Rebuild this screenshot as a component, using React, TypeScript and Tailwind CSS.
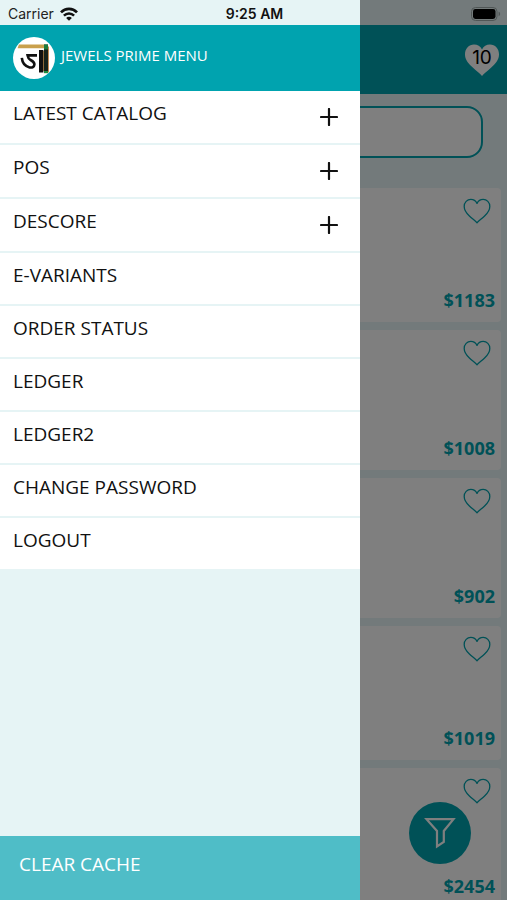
import { useState } from "react"

type MenuItem = {
    label: string
    expandable?: boolean
}

const MENU_ITEMS: MenuItem[] = [
    { label: "LATEST CATALOG", expandable: true },
    { label: "POS", expandable: true },
    { label: "DESCORE", expandable: true },
    { label: "E-VARIANTS" },
    { label: "ORDER STATUS" },
    { label: "LEDGER" },
    { label: "LEDGER2" },
    { label: "CHANGE PASSWORD" },
    { label: "LOGOUT" },
]

const PRODUCTS = [
    { price: "$1183", size: "min-h-[134px]" },
    { price: "$1008", size: "min-h-[140px]" },
    { price: "$902", size: "min-h-[140px]" },
    { price: "$1019", size: "min-h-[134px]" },
    { price: "$2454", size: "min-h-[140px]" },
]

function WifiIcon() {
    return (
        <svg viewBox="0 0 18 14" className="h-3.5 w-[18px]" fill="none" aria-hidden="true">
            <path d="M1 5.4C5.4 0.8 12.6 0.8 17 5.4" stroke="#111" strokeWidth="2.7" />
            <path d="M3.9 8.6C6.8 5.7 11.2 5.7 14.1 8.6" stroke="#111" strokeWidth="2.5" />
            <path d="M9 13.8L6.1 10.9C7.7 9.4 10.3 9.4 11.9 10.9Z" fill="#111" />
        </svg>
    )
}

function BatteryIcon() {
    return (
        <svg viewBox="0 0 30 14" className="h-3.5 w-[30px]" aria-hidden="true">
            <rect x="0.5" y="0.5" width="25.5" height="13" rx="4" fill="#747b7b" stroke="#505656" />
            <rect x="2" y="2" width="22.5" height="10" rx="2.4" fill="#000" />
            <path d="M27.6 4.8C29.6 5.4 29.6 8.6 27.6 9.2Z" fill="#505656" />
        </svg>
    )
}

// iOS status bar, stays above both the page and the drawer
function StatusBar() {
    return (
        <div className="absolute inset-x-0 top-0 z-30 grid h-[25px] grid-cols-3 items-center pt-0.5 pl-2 pr-1.5 font-['Inter',sans-serif] text-sm text-[#222]">
            <div className="flex items-center gap-1.5">
                <span>Carrier</span>
                <WifiIcon />
            </div>
            <span className="text-center font-semibold text-[#111]">9:25 AM</span>
            <div className="flex justify-end">
                <BatteryIcon />
            </div>
        </div>
    )
}

function Logo() {
    return (
        <svg viewBox="0 0 42 42" className="size-[42px] shrink-0" fill="none" role="img" aria-label="Jewels Prime">
            <circle cx="21" cy="21" r="21" fill="#fff" />
            <path d="M6 7.5H31V11.3H4.5Z" fill="#c9a04c" />
            <path d="M24 18.4H14.6C15 20.6 15.6 22 17.6 23C20 24.2 21.6 25.4 21.4 27.6C21.2 29.8 19.2 31 16.6 30.4C12.6 29.4 9.4 26.4 8.8 20.8" stroke="#111" strokeWidth="2.6" />
            <rect x="26" y="13" width="4.4" height="22.5" fill="#111" />
            <rect x="30" y="14" width="1.2" height="20" fill="#8d6a3a" />
            <rect x="31" y="7.5" width="4" height="28" fill="#17231b" />
            <rect x="31" y="7.5" width="4" height="5" fill="#1d7a3c" />
            <rect x="31" y="34" width="4" height="2.2" fill="#1d8a3f" />
            <rect x="35" y="9.5" width="1" height="26" fill="#c58b55" />
        </svg>
    )
}

function HeartIcon() {
    return (
        <svg viewBox="0 0 28 26" className="h-[26px] w-7" fill="none" aria-hidden="true">
            <path d="M14 24.8C12.7 23.2 9.4 20.8 6.4 18C3.2 15 1.2 12.2 1.2 8.5C1.2 4.4 4.2 1.4 7.8 1.4C10.6 1.4 12.8 2.8 14 5.4C15.2 2.8 17.4 1.4 20.2 1.4C23.8 1.4 26.8 4.4 26.8 8.5C26.8 12.2 24.8 15 21.6 18C18.6 20.8 15.3 23.2 14 24.8Z" stroke="#00a2ad" strokeWidth="1.3" strokeLinejoin="round" />
        </svg>
    )
}

function FilterIcon() {
    return (
        <svg viewBox="0 0 32 32" className="size-8" fill="none" aria-hidden="true">
            <path d="M2.5 2.2H29.5L19.8 14V25L13 29.5V14Z" stroke="#fff" strokeWidth="2.2" />
        </svg>
    )
}

function PlusIcon() {
    return (
        <svg viewBox="0 0 18 18" className="size-[18px]" fill="none" aria-hidden="true">
            <path d="M9 1V17M1 9H17" stroke="#111" strokeWidth="2.2" strokeLinecap="round" />
        </svg>
    )
}

function CatalogPage() {
    return (
        <div className="flex min-h-screen flex-col bg-[#e6f5f6] pt-[25px]">
            <header className="flex h-[69px] shrink-0 items-center justify-end bg-[#00a3af] pr-2">
                <button type="button" aria-label="Wishlist, 10 items" className="relative h-8 w-[34px]">
                    <svg viewBox="0 0 34 32" className="h-8 w-[34px]" aria-hidden="true">
                        <path d="M17 32C15.5 30 11.5 27 7.5 23.2C3 19 0 15.5 0 10.2C0 4.5 4 0.5 9 0.5C12.6 0.5 15.4 2.2 17 5.4C18.6 2.2 21.4 0.5 25 0.5C30 0.5 34 4.5 34 10.2C34 15.5 31 19 26.5 23.2C22.5 27 18.5 30 17 32Z" fill="#fff" />
                    </svg>
                    <span className="absolute inset-x-0 top-0 text-center font-['Inter',sans-serif] text-[19px] leading-7 text-black">10</span>
                </button>
            </header>
            <div className="px-6 pt-3">
                <input
                    type="search"
                    aria-label="Search catalog"
                    className="h-[52px] w-full rounded-2xl border-2 border-[#00a3af] bg-white px-4"
                />
            </div>
            <main className="mt-[30px] flex flex-col gap-2 px-1.5">
                {PRODUCTS.map((product) => (
                    <article key={product.price} className={`flex flex-col items-end justify-between rounded-sm bg-white pt-2.5 pr-1.5 pb-2 ${product.size}`}>
                        <button type="button" aria-label="Add to wishlist" className="mr-1">
                            <HeartIcon />
                        </button>
                        <p className="text-lg leading-7 font-bold text-[#00a3af]">{product.price}</p>
                    </article>
                ))}
            </main>
            <button
                type="button"
                aria-label="Filter"
                className="absolute right-9 bottom-9 flex size-[62px] items-center justify-center rounded-full bg-[#00a3af]"
            >
                <FilterIcon />
            </button>
        </div>
    )
}

function MenuRow({ item }: { item: MenuItem }) {
    const [open, setOpen] = useState(false)

    return (
        <li className="border-b-2 border-[#e6f4f5] bg-white last:border-b-0">
            <button
                type="button"
                aria-expanded={item.expandable ? open : undefined}
                onClick={() => setOpen(!open)}
                className={`flex w-full items-start justify-between pt-2 pr-[22px] pl-[13px] text-left text-[19px] leading-7 text-[#111] ${item.expandable ? "h-[52px]" : "h-[51px]"}`}
            >
                <span>{item.label}</span>
                {item.expandable && (
                    <span className="pt-[9px]">
                        <PlusIcon />
                    </span>
                )}
            </button>
        </li>
    )
}

function Drawer() {
    return (
        <aside className="absolute inset-y-0 left-0 z-20 flex w-[71%] flex-col bg-[#e6f4f5] pt-[25px]">
            <div className="flex h-[66px] shrink-0 items-center gap-1.5 bg-[#00a3af] pl-[13px]">
                <Logo />
                <h1 className="pb-1.5 text-[15px] leading-6 text-white">JEWELS PRIME MENU</h1>
            </div>
            <nav aria-label="Main menu" className="flex-1">
                <ul>
                    {MENU_ITEMS.map((item) => (
                        <MenuRow key={item.label} item={item} />
                    ))}
                </ul>
            </nav>
            <button type="button" className="flex h-16 shrink-0 items-start bg-[#4fbdc7] pt-3.5 pl-[19px] text-[19px] leading-7 text-white">
                CLEAR CACHE
            </button>
        </aside>
    )
}

export default function App() {
    return (
        <div className="relative h-screen overflow-hidden font-['Open_Sans',sans-serif]">
            <CatalogPage />
            {/* Dimmed backdrop */}
            <div className="absolute inset-0 z-10 bg-black/50" />
            <Drawer />
            <StatusBar />
        </div>
    )
}
